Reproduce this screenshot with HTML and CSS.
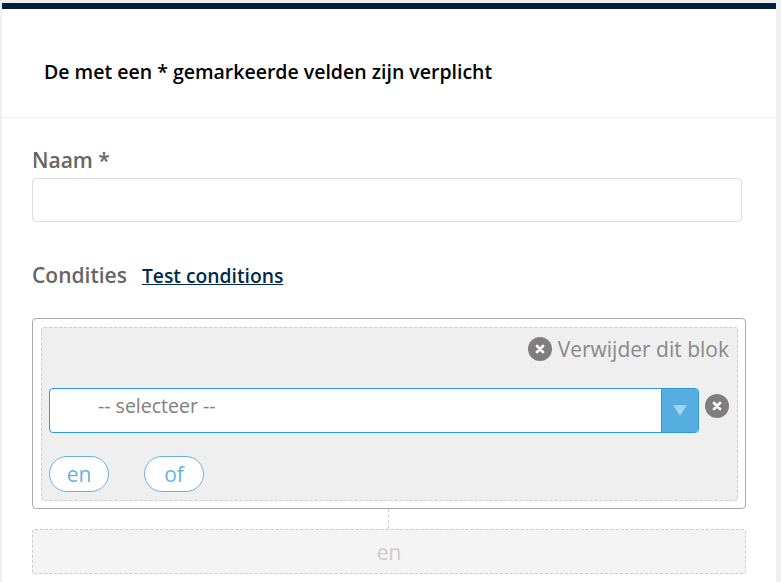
FILE: index.html
```html
<!DOCTYPE html>
<html lang="en">
<head>
    <meta charset="UTF-8">
    <title>Condities</title>
    <link rel="stylesheet" href="styles.css">
</head>
<body>
    <div class="panel">
        <div class="panel-head">De met een * gemarkeerde velden zijn verplicht</div>
        <div class="panel-body">
            <label class="field-label">Naam *</label>
            <input type="text" class="text-input">

            <div class="conditions-head">
                <span class="conditions-title">Condities</span>
                <a class="test-link" href="#">Test conditions</a>
            </div>

            <div class="block">
                <div class="block-inner">
                    <div class="block-remove">
                        <svg class="remove-icon" viewBox="0 0 24 24"><circle cx="12" cy="12" r="12" fill="#7f7d7d"/><path d="M9 9l6 6M15 9l-6 6" stroke="#fff" stroke-width="2.8" stroke-linecap="round"/></svg>
                        <span>Verwijder dit blok</span>
                    </div>
                    <div class="select-row">
                        <div class="select">
                            <span class="select-text">-- selecteer --</span>
                            <span class="select-arrow"><span class="arrow-down"></span></span>
                        </div>
                        <svg class="remove-icon row-remove" viewBox="0 0 24 24"><circle cx="12" cy="12" r="12" fill="#7f7d7d"/><path d="M9 9l6 6M15 9l-6 6" stroke="#fff" stroke-width="2.8" stroke-linecap="round"/></svg>
                    </div>
                    <div class="pill-row">
                        <button class="pill">en</button>
                        <button class="pill">of</button>
                    </div>
                </div>
            </div>
            <div class="connector"></div>
            <div class="add-block">en</div>
        </div>
    </div>
</body>
</html>
```

FILE: styles.css
```css
html, body {
    height: 100%;
}

body {
    margin: 0;
    padding: 3px 5px 0 2px;
    box-sizing: border-box;
    background-color: #efefef;
    font-family: "Open Sans", sans-serif;
    overflow: hidden;
}

.panel {
    box-sizing: border-box;
    height: 100%;
    background-color: #fff;
    border-top: 6px solid #002039;
}

.panel-head {
    height: 109px;
    padding: 16px 0 0 42px;
    box-sizing: border-box;
    border-bottom: 1px solid #f2f2f2;
    display: flex;
    align-items: center;
    font-size: 19.5px;
    font-weight: 600;
    color: #000;
}

.panel-body {
    padding: 29px 30px 0 30px;
}

.field-label {
    display: block;
    font-size: 21px;
    font-weight: 600;
    line-height: 27px;
    color: #666;
    margin-bottom: 4px;
}

.text-input {
    display: block;
    width: 710px;
    height: 44px;
    box-sizing: border-box;
    border: 1px solid #ddd;
    border-radius: 4px;
    background-color: #fff;
}

.conditions-head {
    display: flex;
    align-items: baseline;
    gap: 15px;
    margin-top: 40px;
    line-height: 27px;
}

.conditions-title {
    font-size: 21px;
    font-weight: 600;
    color: #666;
}

.test-link {
    font-size: 19.3px;
    font-weight: 600;
    color: #002b4d;
}

.block {
    width: 714px;
    height: 191px;
    box-sizing: border-box;
    margin-top: 29px;
    padding: 8px 7px 7px 8px;
    border: 1px solid #aaa;
    border-radius: 4px;
}

.block-inner {
    height: 100%;
    box-sizing: border-box;
    padding: 0 7px;
    background-color: #efefef;
    border: 1px dashed #ccc;
    border-radius: 3px;
}

.block-remove {
    display: flex;
    justify-content: flex-end;
    align-items: center;
    gap: 6px;
    height: 42px;
    padding-right: 1px;
    font-size: 21px;
    color: #888;
}

.remove-icon {
    width: 24px;
    height: 24px;
    flex-shrink: 0;
}

.row-remove {
    align-self: flex-start;
    margin-top: 6px;
}

.select-row {
    display: flex;
    align-items: center;
    gap: 6px;
    margin-top: 18px;
}

.select {
    display: flex;
    width: 650px;
    height: 45px;
    box-sizing: border-box;
    background-color: #fff;
    border: 1px solid #2b9bdc;
    border-radius: 4px;
    overflow: hidden;
}

.select-text {
    flex: 1;
    padding-left: 48px;
    font-size: 19.5px;
    line-height: 34px;
    color: #808080;
}

.select-arrow {
    display: flex;
    align-items: center;
    justify-content: center;
    width: 36px;
    background-color: #56addf;
    border-left: 1px solid #2b9bdc;
}

.arrow-down {
    border-left: 7px solid transparent;
    border-right: 7px solid transparent;
    border-top: 11px solid #a3d3ee;
}

.pill-row {
    display: flex;
    gap: 35px;
    margin-top: 23px;
}

.pill {
    width: 60px;
    height: 36px;
    padding: 0;
    background-color: #fff;
    border: 1px solid #64b3e4;
    border-radius: 18px;
    font-family: inherit;
    font-size: 21px;
    color: #64b3e4;
}

.connector {
    width: 0;
    height: 20px;
    margin-left: 356px;
    border-left: 1px dashed #ccc;
}

.add-block {
    width: 714px;
    height: 45px;
    box-sizing: border-box;
    background-color: #f4f4f4;
    border: 1px dashed #ccc;
    border-radius: 3px;
    text-align: center;
    font-size: 21px;
    line-height: 45px;
    color: #ccc;
}
```
